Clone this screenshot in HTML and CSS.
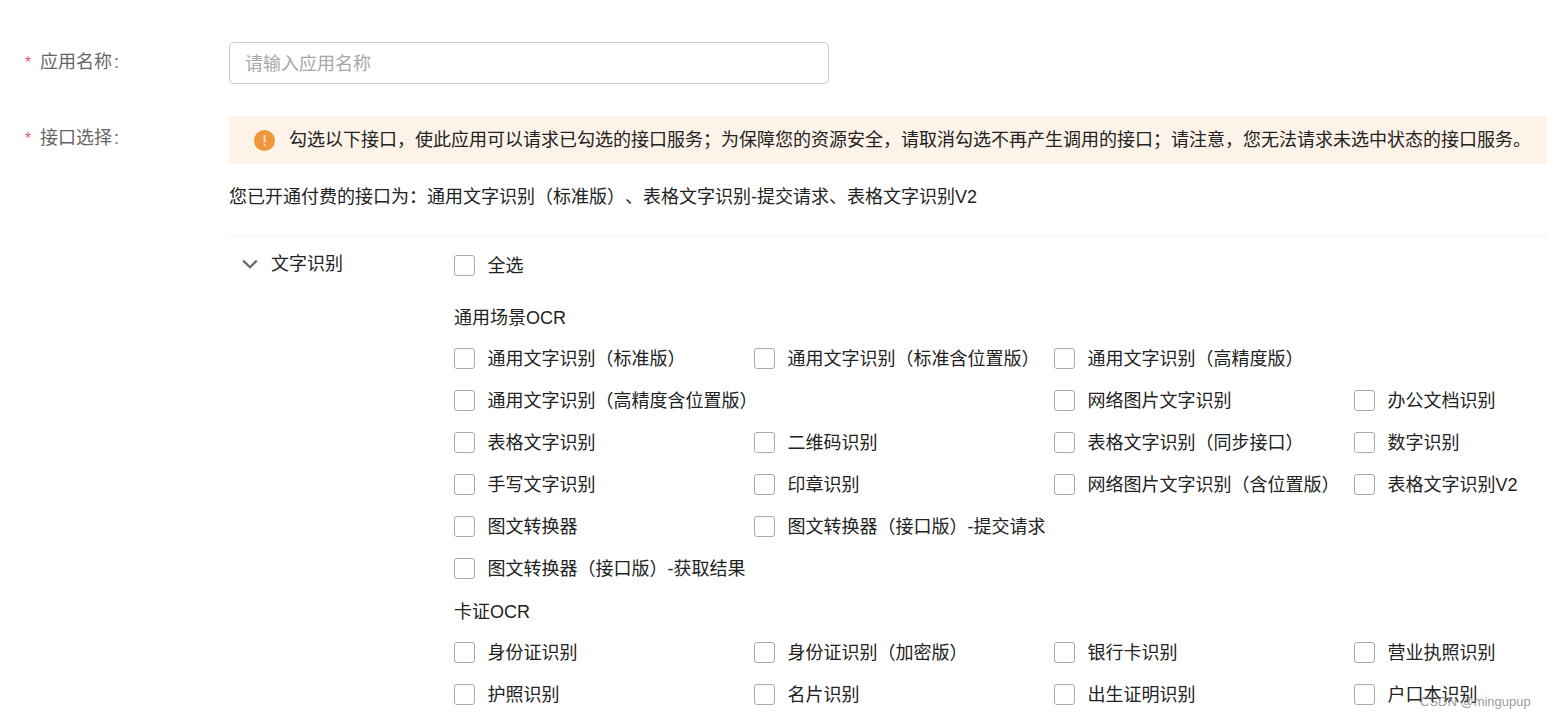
FILE: index.html
```html
<!DOCTYPE html>
<html lang="zh-CN">
<head>
<meta charset="utf-8">
<title>创建应用</title>
<link rel="stylesheet" href="styles.css">
</head>
<body>
<form class="form">
  <div class="row name-row">
    <label class="label"><span class="star">*</span>应用名称<span class="colon">:</span></label>
    <div class="control"><input class="input" type="text" placeholder="请输入应用名称"></div>
  </div>
  <div class="row api-row">
    <label class="label"><span class="star">*</span>接口选择<span class="colon">:</span></label>
    <div class="control">
      <div class="alert">
        <svg class="alert-icon" viewBox="0 0 21 21" aria-hidden="true"><circle cx="10.5" cy="10.5" r="10.5" fill="#f0973b"/><rect x="9.6" y="5" width="1.8" height="7.6" rx=".6" fill="#fbe6cf"/><rect x="9.6" y="14" width="1.8" height="1.9" rx=".6" fill="#fbe6cf"/></svg>
        <span>勾选以下接口&#xFF0C;使此应用可以请求已勾选的接口服务&#xFF1B;为保障您的资源安全&#xFF0C;请取消勾选不再产生调用的接口&#xFF1B;请注意&#xFF0C;您无法请求未选中状态的接口服务&#x3002;</span>
      </div>
      <p class="paid">您已开通付费的接口为&#xFF1A;通用文字识别&#xFF08;标准版&#xFF09;&#x3001;表格文字识别-提交请求&#x3001;表格文字识别V2</p>
      <div class="group">
        <div class="group-head">
          <svg class="chevron" viewBox="0 0 16 10" aria-hidden="true"><path d="M1.2 1.6 8 8.2l6.8-6.6" fill="none" stroke="#666a70" stroke-width="2.2"/></svg>
          <span>文字识别</span>
        </div>
        <div class="group-body">
          <label class="item all"><i class="box"></i>全选</label>
          <div class="title first">通用场景OCR</div>
          <div class="grid">
            <label class="item"><i class="box"></i>通用文字识别&#xFF08;标准版&#xFF09;</label>
            <label class="item"><i class="box"></i>通用文字识别&#xFF08;标准含位置版&#xFF09;</label>
            <label class="item span-last"><i class="box"></i>通用文字识别&#xFF08;高精度版&#xFF09;</label>
            <label class="item span-two"><i class="box"></i>通用文字识别&#xFF08;高精度含位置版&#xFF09;</label>
            <label class="item"><i class="box"></i>网络图片文字识别</label>
            <label class="item"><i class="box"></i>办公文档识别</label>
            <label class="item"><i class="box"></i>表格文字识别</label>
            <label class="item"><i class="box"></i>二维码识别</label>
            <label class="item"><i class="box"></i>表格文字识别&#xFF08;同步接口&#xFF09;</label>
            <label class="item"><i class="box"></i>数字识别</label>
            <label class="item"><i class="box"></i>手写文字识别</label>
            <label class="item"><i class="box"></i>印章识别</label>
            <label class="item"><i class="box"></i>网络图片文字识别&#xFF08;含位置版&#xFF09;</label>
            <label class="item"><i class="box"></i>表格文字识别V2</label>
            <label class="item"><i class="box"></i>图文转换器</label>
            <label class="item span-three"><i class="box"></i>图文转换器&#xFF08;接口版&#xFF09;-提交请求</label>
            <label class="item span-all"><i class="box"></i>图文转换器&#xFF08;接口版&#xFF09;-获取结果</label>
          </div>
          <div class="title">卡证OCR</div>
          <div class="grid">
            <label class="item"><i class="box"></i>身份证识别</label>
            <label class="item"><i class="box"></i>身份证识别&#xFF08;加密版&#xFF09;</label>
            <label class="item"><i class="box"></i>银行卡识别</label>
            <label class="item"><i class="box"></i>营业执照识别</label>
            <label class="item"><i class="box"></i>护照识别</label>
            <label class="item"><i class="box"></i>名片识别</label>
            <label class="item"><i class="box"></i>出生证明识别</label>
            <label class="item"><i class="box"></i>户口本识别</label>
          </div>
        </div>
      </div>
    </div>
  </div>
</form>
<div class="watermark">CSDN @mingupup</div>
</body>
</html>
```
FILE: styles.css
```css
html, body {
  margin: 0;
  height: 719px;
  overflow: hidden;
  background: #fff;
}
body {
  position: relative;
  font-family: "Liberation Sans", "Noto Sans CJK SC", sans-serif;
  font-size: 18px;
  line-height: 26px;
  color: #222;
  text-spacing-trim: space-all;
}
.form {
  padding-top: 42px;
}
.row {
  display: flex;
}
.name-row {
  height: 74px;
}
.label {
  flex: 0 0 229px;
  box-sizing: border-box;
  padding: 7px 0 0 25px;
  color: #666;
  display: block;
}
.api-row .label {
  padding-top: 9px;
}
.colon {
  margin-left: 2px;
}
.star {
  display: inline-block;
  width: 15px;
  color: #e4606d;
  font-size: 16px;
}
.control {
  flex: 1 1 auto;
  min-width: 0;
}
.input {
  display: block;
  box-sizing: border-box;
  width: 600px;
  height: 42px;
  padding: 2px 15px 0;
  border: 1px solid #ccc;
  border-radius: 5px;
  outline: 0;
  font: inherit;
  color: #222;
}
.input::placeholder {
  color: #a8a8a8;
  opacity: 1;
}
.alert {
  display: flex;
  align-items: center;
  gap: 14px;
  height: 48px;
  padding-left: 25px;
  border-radius: 5px 0 0 5px;
  background: #fdf3e8;
  white-space: nowrap;
}
.alert-icon {
  flex: none;
  width: 21px;
  height: 21px;
}
.paid {
  margin: 20px 0 25px;
  white-space: nowrap;
}
.group {
  display: flex;
  border-top: 1px solid #f2f2f2;
}
.group-head {
  flex: 0 0 225px;
  display: flex;
  align-items: flex-start;
  gap: 13px;
  box-sizing: border-box;
  padding: 15px 0 0 13px;
  height: 60px;
}
.chevron {
  width: 16px;
  height: 10px;
  margin-top: 8px;
}
.group-body {
  flex: 1 1 auto;
  min-width: 0;
}
.title {
  height: 42px;
  line-height: 44px;
}
.title.first {
  margin-top: 11px;
  height: 40px;
  line-height: 40px;
}
.grid {
  display: grid;
  grid-template-columns: repeat(3, 300px) 1fr;
  grid-auto-rows: 42px;
}
.item {
  display: flex;
  align-items: center;
  gap: 12.5px;
  height: 42px;
  white-space: nowrap;
}
.item.all {
  margin-top: 9px;
}
.span-last {
  grid-column: 3 / span 2;
}
.span-two {
  grid-column: 1 / span 2;
}
.span-three {
  grid-column: 2 / span 3;
}
.span-all {
  grid-column: 1 / span 4;
}
.box {
  flex: none;
  box-sizing: border-box;
  width: 21px;
  height: 21px;
  margin-bottom: 2px;
  border: 1px solid #aaa;
  border-radius: 3px;
  background: #fff;
}
.watermark {
  position: absolute;
  left: 1420px;
  top: 694px;
  font-size: 13px;
  line-height: 16px;
  color: rgba(120, 120, 120, .75);
}
```
